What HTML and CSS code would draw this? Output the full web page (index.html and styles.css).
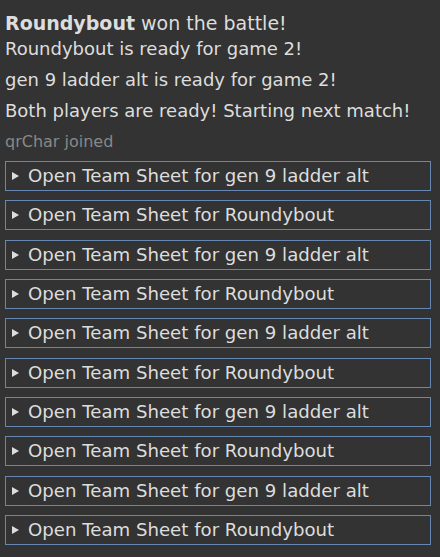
FILE: index.html
```html
<!DOCTYPE html>
<html>
<head>
<meta charset="utf-8">
<link rel="stylesheet" href="styles.css">
</head>
<body>
<div class="log">
  <div class="line first"><strong>Roundybout</strong> won the battle!</div>
  <div class="line">Roundybout is ready for game 2!</div>
  <div class="line spaced">gen 9 ladder alt is ready for game 2!</div>
  <div class="line spaced">Both players are ready! Starting next match!</div>
  <div class="line spaced join">qrChar joined</div>
  <div class="sheets">
    <div class="sheet"><span class="tri"></span>Open Team Sheet for gen 9 ladder alt</div>
    <div class="sheet"><span class="tri"></span>Open Team Sheet for Roundybout</div>
    <div class="sheet"><span class="tri"></span>Open Team Sheet for gen 9 ladder alt</div>
    <div class="sheet"><span class="tri"></span>Open Team Sheet for Roundybout</div>
    <div class="sheet"><span class="tri"></span>Open Team Sheet for gen 9 ladder alt</div>
    <div class="sheet"><span class="tri"></span>Open Team Sheet for Roundybout</div>
    <div class="sheet"><span class="tri"></span>Open Team Sheet for gen 9 ladder alt</div>
    <div class="sheet"><span class="tri"></span>Open Team Sheet for Roundybout</div>
    <div class="sheet"><span class="tri"></span>Open Team Sheet for gen 9 ladder alt</div>
    <div class="sheet"><span class="tri"></span>Open Team Sheet for Roundybout</div>
  </div>
</div>
</body>
</html>
```
FILE: styles.css
```css
html, body {
  margin: 0;
  padding: 0;
  background: #333333;
}
body {
  font-family: "DejaVu Sans", Verdana, sans-serif;
  font-size: 18px;
  color: #dddddd;
  overflow: hidden;
}
.log {
  padding: 8px 9px 0 5px;
}
.line {
  line-height: 26px;
  white-space: nowrap;
}
.first {
  padding-top: 2px;
  font-size: 19px;
}
.first strong {
  font-weight: bold;
}
.spaced {
  margin-top: 5px;
}
.join {
  color: #888888;
  font-size: 16px;
}
.sheets {
  display: flex;
  flex-direction: column;
  gap: 9.35px;
  margin-top: 6px;
}
.sheet {
  height: 28px;
  line-height: 28px;
  border: 1px solid #6587b2;
  padding-left: 6px;
  display: flex;
  align-items: center;
  white-space: nowrap;
  font-size: 18.15px;
}
.tri {
  width: 0;
  height: 0;
  border-top: 4px solid transparent;
  border-bottom: 4px solid transparent;
  border-left: 7px solid #dddddd;
  margin-right: 9px;
}
```
